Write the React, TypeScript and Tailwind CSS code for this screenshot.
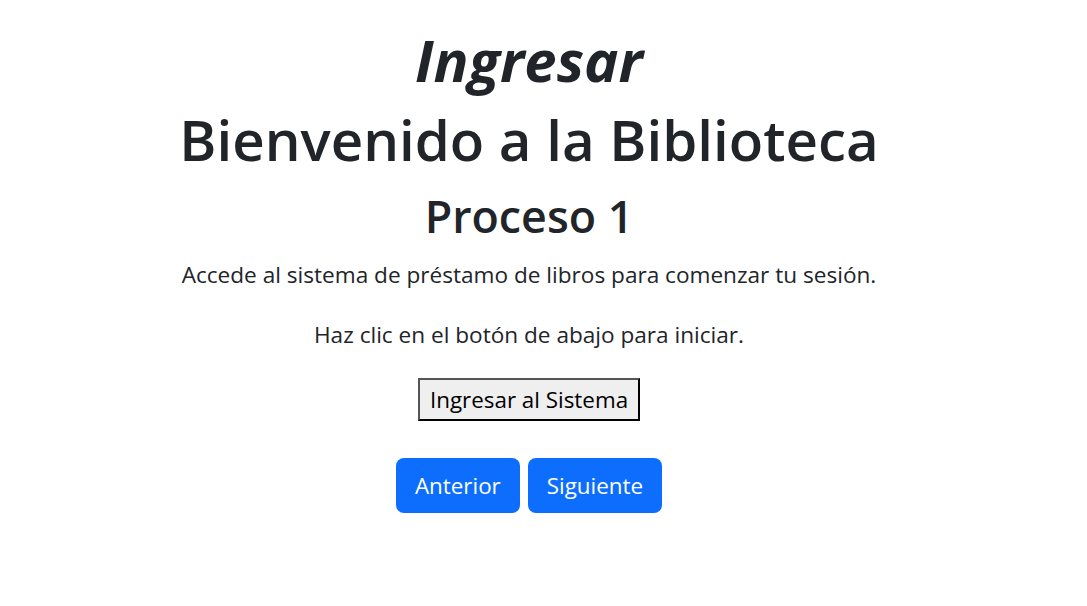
export default function App() {
  return (
    <div
      className="min-h-screen bg-white text-[#212529] text-center"
      style={{ fontFamily: '"Open Sans", "Noto Sans", sans-serif' }}
    >
      <div className="flex flex-col items-center pt-[26px] pr-[29px]">
        <h1 className="text-[58px] leading-[68px] font-bold italic">Ingresar</h1>
        <h2 className="text-[56.4px] leading-[80px] font-semibold mt-[6px]">Bienvenido a la Biblioteca</h2>
        <h3 className="text-[44.8px] leading-[60px] font-semibold mt-[6px]">Proceso 1</h3>
        <p className="text-[22.6px] leading-[34px] mt-[12px]">
          Accede al sistema de préstamo de libros para comenzar tu sesión.
        </p>
        <p className="text-[22.6px] leading-[34px] mt-[26px]">Haz clic en el botón de abajo para iniciar.</p>
        <button className="mt-[26px] h-[43px] px-[10px] border-2 border-[#555] border-r-black border-b-black bg-[#efefef] text-black text-[22.4px]">
          Ingresar al Sistema
        </button>
        <div className="flex gap-2 mt-[37px]">
          <button className="h-[55px] px-[19px] rounded-lg bg-[#0d6efd] text-white text-[22.4px]">Anterior</button>
          <button className="h-[55px] px-[19px] rounded-lg bg-[#0d6efd] text-white text-[22.4px]">Siguiente</button>
        </div>
      </div>
    </div>
  );
}
